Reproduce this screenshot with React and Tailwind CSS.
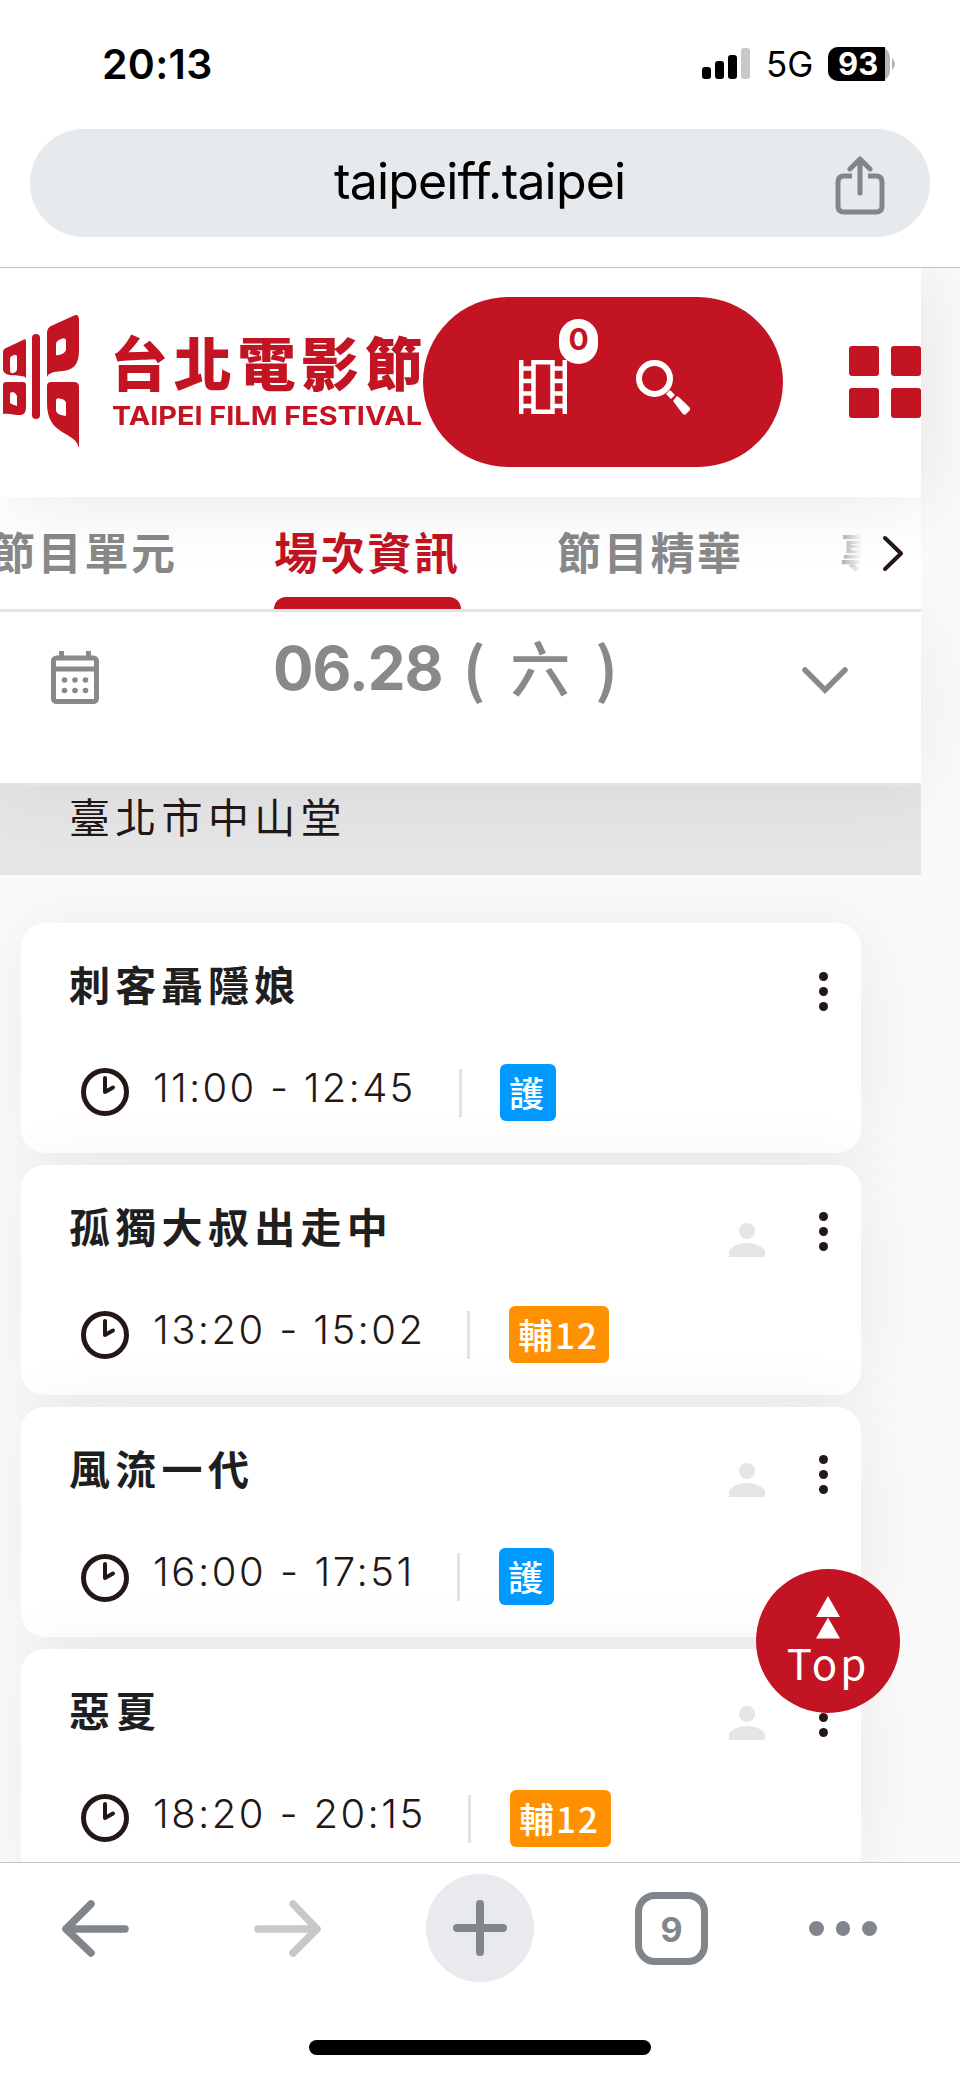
const RED = '#c21423';
const CJK = "font-['Noto_Sans_CJK_TC','Noto_Sans',sans-serif]";
const INTER = 'font-[Inter,sans-serif]';

function StatusBar() {
  return (
    <div className={`flex h-[129px] items-start justify-between pl-[102px] pr-[64px] pt-[43px] ${INTER}`}>
      <span className="text-[41px] leading-[42px] font-semibold tracking-[0.300px]">20:13</span>
      <div className="flex h-[42px] items-center">
        <svg width="49" height="32" viewBox="0 0 49 32">
          <rect x="0" y="19" width="9" height="12" rx="3" />
          <rect x="13" y="13" width="9" height="18" rx="3" />
          <rect x="26" y="7" width="9" height="24" rx="3" />
          <rect x="39" y="0" width="9" height="31" rx="3" fill="#c8c8c8" />
        </svg>
        <span className="ml-[15px] w-[62px] text-[35px] leading-[42px] font-normal">5G</span>
        <div className="relative h-[34px] w-[68px]">
          <svg className="absolute inset-0" width="68" height="34" viewBox="0 0 68 34">
            <rect x="0" y="0" width="62" height="34" rx="10" fill="#b5b5b5" />
            <path d="M10 0H57V34H10A10 10 0 0 1 0 24V10A10 10 0 0 1 10 0Z" />
            <path d="M64 11.500C68 14 68 20 64 22.500Z" fill="#b5b5b5" />
          </svg>
          <span className="absolute left-[10px] top-0 text-[31px] leading-[34px] font-bold text-white">93</span>
        </div>
      </div>
    </div>
  );
}

function AddressBar() {
  return (
    <div className="h-[139px] border-b border-[#c4c4c4] px-[30px]">
      <div className="flex h-[108px] items-center rounded-full bg-[#e6eaed] pr-[44px]">
        <span className={`ml-[304px] w-[300px] text-[50px] leading-[60px] tracking-[-0.850px] whitespace-nowrap pb-[5px] ${INTER}`}>taipeiff.taipei</span>
        <svg className="ml-auto mt-[5px]" width="52" height="60" viewBox="0 0 52 60" fill="none" stroke="#80868b" strokeWidth="5" strokeLinecap="round" strokeLinejoin="round">
          <path d="M18 20H10Q4 20 4 26V50Q4 56 10 56H42Q48 56 48 50V26Q48 20 42 20H34" strokeLinecap="butt" />
          <path d="M26 37V4M16 13L26 3L36 13" />
        </svg>
      </div>
    </div>
  );
}

function Logo() {
  return (
    <div className="flex w-[423px] shrink-0 items-start pl-[3px] text-[#c21423]">
      <svg className="mt-[47px] shrink-0" width="77" height="134" viewBox="0 0 77 134" fill={RED} fillRule="evenodd">
        <path d="M0 37Q0 34 3 33L20 25Q23 23 23 26V63C20 58 0 64 0 54ZM7 44V56Q8 59 10 58Q14 57 14 54V42Q14 39 11 40Q7 41 7 44Z" />
        <path d="M0 70Q0 67 3 67H20Q23 67 23 70V92C23 106 10 97 0 99ZM7 79V88Q10 90 14 91V81Q13 78 10 77Q7 77 7 79Z" />
        <rect x="29" y="19" width="8" height="85" rx="4" />
        <path d="M44 18Q44 13 48 11L70 1Q76 -2 76 5V35C76 66 50 50 44 62ZM53 29V40Q54 41 59 39Q63 37 63 34V25Q62 22 58 24Q53 26 53 29Z" />
        <path d="M44 71Q44 67 48 67H71Q76 67 76 72V133C72 115 44 122 44 88ZM53 86V96Q54 100 63 101V88Q62 84 58 84Q53 82 53 86Z" />
      </svg>
      <div className="ml-[32px] pt-[63px]">
        <div className={`-ml-[2px] h-[70px] text-[58px] leading-[60px] font-black tracking-[5.700px] whitespace-nowrap ${CJK}`}>台北電影節</div>
        <div className={`w-[280px] origin-left scale-x-[1.13] text-[25.500px] leading-[30px] font-bold whitespace-nowrap ${INTER}`}>TAIPEI FILM FESTIVAL</div>
      </div>
    </div>
  );
}

function Header() {
  return (
    <header className="relative z-30 flex h-[229px] w-[921px] items-start bg-white shadow-[5px_5px_75px_rgba(0,0,0,0.09)]">
      <Logo />
      <div className="mt-[29px] flex h-[170px] w-[360px] items-start rounded-full bg-[#c21423] pl-[96px] pt-[63px]">
        <div className="relative">
          <svg width="48" height="54" viewBox="0 0 48 54" fill="none" stroke="#fff" strokeWidth="4.500">
            <path d="M2.200 0V54M45.800 0V54M14.500 0V54M33.500 0V54" />
            <path d="M14 2.200H34M14 51.800H34M2 8.500H14M2 21H14M2 33.500H14M2 46H14M34 8.500H46M34 21H46M34 33.500H46M34 46H46" />
          </svg>
          <span className={`absolute left-[40px] top-[-41px] flex h-[45px] w-[39px] justify-center rounded-full bg-white text-[30px] leading-[40px] font-bold text-[#c21423] ${INTER}`}>0</span>
        </div>
        <svg className="ml-[69px]" width="54" height="55" viewBox="0 0 54 55">
          <circle cx="18.500" cy="18.500" r="15.500" fill="none" stroke="#fff" strokeWidth="6" />
          <path d="M31 34L34 31L38 35L35 38Z" fill="#fff" stroke="#fff" strokeWidth="1.500" strokeLinejoin="round" />
          <path d="M38 41L41 37Q43 38 53 48Q54 49 53 50L49 54Q48 54 47 53Z" fill="#fff" stroke="#fff" strokeWidth="1.500" strokeLinejoin="round" />
        </svg>
      </div>
      <div className="ml-auto mt-[78px] grid grid-cols-2 gap-x-[12px] gap-y-[12px]">
        {[0, 1, 2, 3].map((n) => (
          <div key={n} className="size-[30px] rounded-[3px] bg-[#c21423]" />
        ))}
      </div>
    </header>
  );
}

function Tabs() {
  return (
    <nav className={`relative z-20 flex h-[115px] w-[921px] items-start overflow-hidden border-b-[3px] border-[#e3e3e3] bg-white text-[44px] leading-[108px] font-bold tracking-[2.700px] whitespace-nowrap text-[#898989] ${CJK}`}>
      <span className="ml-[-9px] w-[283px] shrink-0">節目單元</span>
      <span className="relative h-[112px] w-[283px] shrink-0 text-[#c21423]">
        場次資訊
        <span className="absolute bottom-0 left-0 h-[12px] w-[187px] rounded-t-[12px] bg-[#c21423]" />
      </span>
      <span className="w-[283px] shrink-0">節目精華</span>
      <span className="w-[22px] shrink-0 overflow-hidden bg-gradient-to-r from-[#aaa] to-white bg-clip-text text-transparent">專</span>
      <svg className="ml-[19px] mt-[38px] shrink-0" width="24" height="38" viewBox="0 0 24 38" fill="none" stroke="#231815" strokeWidth="4" strokeLinecap="round" strokeLinejoin="round">
        <path d="M4 3L20 18.500L4 34" />
      </svg>
    </nav>
  );
}

function DatePicker() {
  return (
    <div className="relative z-10 flex h-[174px] w-[921px] items-start border-b-[3px] border-[#e3e3e3] bg-white pl-[51px] text-[#898989] shadow-[5px_5px_75px_rgba(0,0,0,0.06)]">
      <svg className="mt-[38px]" width="49" height="55" viewBox="0 0 49 55" fill="none" stroke="#898989" strokeWidth="5">
        <rect x="2.500" y="8" width="43" height="43.500" rx="3" />
        <path d="M2 19H46M10.500 1V8M37.500 1V8" />
        <g fill="#898989" stroke="none">
          <circle cx="13.500" cy="30" r="2.800" /><circle cx="24" cy="30" r="2.800" /><circle cx="34.500" cy="30" r="2.800" />
          <circle cx="13.500" cy="40.500" r="2.800" /><circle cx="24" cy="40.500" r="2.800" /><circle cx="34.500" cy="40.500" r="2.800" />
        </g>
      </svg>
      <div className="ml-[173px] mt-[14px] flex h-[80px] items-center">
        <span className={`w-[190px] pt-[4px] text-[60px] leading-[76px] font-bold tracking-[-1px] ${INTER}`}>06.28</span>
        <span className={`text-[60px] leading-[76px] font-bold tracking-[5.500px] whitespace-nowrap ${CJK}`}>( <span className="font-medium">六</span> )</span>
      </div>
      <svg className="ml-auto mr-[70px] mt-[50px]" width="52" height="34" viewBox="0 0 52 34" fill="none" stroke="#898989" strokeWidth="5.500" strokeLinecap="round" strokeLinejoin="round">
        <path d="M6 8L26 28L46 8" strokeLinejoin="miter" />
      </svg>
    </div>
  );
}

const Dots = () => (
  <div className="flex flex-col gap-[6px]">
    <span className="size-[9px] rounded-full bg-[#231815]" />
    <span className="size-[9px] rounded-full bg-[#231815]" />
    <span className="size-[9px] rounded-full bg-[#231815]" />
  </div>
);

const Person = () => (
  <svg width="36" height="34" viewBox="0 0 36 34" fill="#e5e5e5">
    <circle cx="18" cy="8" r="8" />
    <path d="M0 34V28C3 23 10 20 18 20S33 23 36 28V34Z" />
  </svg>
);

const Clock = () => (
  <svg className="shrink-0" width="48" height="48" viewBox="0 0 48 48" fill="none" stroke="#231815" strokeLinecap="round" strokeLinejoin="round">
    <circle cx="24" cy="24" r="21.500" strokeWidth="5" />
    <path d="M24 10V24L32 19.500" strokeWidth="4" />
  </svg>
);

const films = [
  { title: '刺客聶隱娘', time: '11:00 - 12:45', rating: '護', seat: false, dots: 'mt-[49px]', person: '', clock: 'mt-[4px]', timeCls: 'w-[307px] tracking-[2.250px]', tag: 'ml-[38px] w-[56px] bg-[#0099ff]' },
  { title: '孤獨大叔出走中', time: '13:20 - 15:02', rating: '輔12', seat: true, dots: 'mt-[47px]', person: 'mt-[58px]', clock: 'mt-[5px]', timeCls: 'w-[315px] tracking-[2.400px]', tag: 'ml-[39px] w-[100px] bg-[#ff9100]' },
  { title: '風流一代', time: '16:00 - 17:51', rating: '護', seat: true, dots: 'mt-[48px]', person: 'mt-[56px]', clock: 'mt-[6px]', timeCls: 'w-[305px] tracking-[2.550px]', tag: 'ml-[39px] w-[55px] bg-[#0099ff]' },
  { title: '惡夏', time: '18:20 - 20:15', rating: '輔12', seat: true, dots: 'mt-[49px]', person: 'mt-[57px]', clock: 'mt-[4px]', timeCls: 'w-[316px] tracking-[2.400px]', tag: 'ml-[39px] w-[101px] bg-[#ff9100]' },
];

function FilmCard({ film }) {
  return (
    <article className="relative h-[230px] w-[840px] shrink-0 rounded-[24px] bg-white shadow-[5px_5px_75px_rgba(0,0,0,0.065)]">
      <div className="flex h-[141px] items-start pl-[48px] pr-[33px]">
        <h2 className={`mt-[30px] text-[41px] leading-[60px] font-bold tracking-[5.300px] text-[#1f1f1f] ${CJK}`}>{film.title}</h2>
        <div className="ml-auto flex items-start gap-[54px]">
          {film.seat && <div className={film.person}><Person /></div>}
          <div className={film.dots}><Dots /></div>
        </div>
      </div>
      <div className="flex h-[57px] items-start pl-[60px]">
        <div className={film.clock}><Clock /></div>
        <span className={`ml-[24px] text-[40px] leading-[48px] font-light whitespace-nowrap text-[#231815] ${INTER} ${film.timeCls}`}>{film.time}</span>
        <span className="mt-[5px] -ml-px h-[48px] w-[3px] shrink-0 bg-[#e3e3e3]" />
        <span className={`flex h-[57px] shrink-0 items-start rounded-[6px] pl-[9px] text-[35px] leading-[56px] font-medium tracking-[2px] text-white ${CJK} ${film.tag}`}>{film.rating}</span>
      </div>
    </article>
  );
}

function Toolbar() {
  return (
    <div className="relative z-40 flex h-[217px] flex-col items-center border-t border-[#c4c4c4] bg-white">
      <div className="mt-[11px] flex h-[108px] w-full shrink-0 items-center pl-[60px]">
        <svg width="72" height="60" viewBox="0 0 72 60" fill="none" stroke="#80868b" strokeWidth="7.500" strokeLinecap="round" strokeLinejoin="round">
          <path d="M65 31H6M31 6L6 31L31 55" />
        </svg>
        <svg className="ml-[120px]" width="72" height="60" viewBox="0 0 72 60" fill="none" stroke="#c8c8c8" strokeWidth="7.500" strokeLinecap="round" strokeLinejoin="round">
          <path d="M6 31H65M41 6L65 31L41 55" />
        </svg>
        <div className="ml-[102px] flex size-[108px] items-center justify-center rounded-full bg-[#e8eaee]">
          <svg width="60" height="60" viewBox="0 0 60 60" fill="none" stroke="#80868b" strokeWidth="8" strokeLinecap="round">
            <path d="M30 6V54M7 30H53" />
          </svg>
        </div>
        <div className={`ml-[101px] flex size-[73px] items-center justify-center rounded-[20px] border-[7px] border-[#80868b] pt-[2px] text-[34px] font-bold text-[#80868b] ${INTER}`}>9</div>
        <div className="ml-[101px] flex gap-[12px] pt-[1px]">
          <span className="size-[14.500px] rounded-full bg-[#80868b]" />
          <span className="size-[14.500px] rounded-full bg-[#80868b]" />
          <span className="size-[14.500px] rounded-full bg-[#80868b]" />
        </div>
      </div>
      <div className="mt-[58px] h-[15px] w-[342px] rounded-full bg-black" />
    </div>
  );
}

export default function App() {
  return (
    <div className="relative flex h-[2079px] w-[960px] flex-col overflow-hidden bg-white text-black">
      <StatusBar />
      <AddressBar />
      <main className="h-[1594px] shrink-0 overflow-hidden bg-[#fafafa]">
        <Header />
        <Tabs />
        <DatePicker />
        <div className={`h-[89px] w-[921px] bg-[#e5e5e5] pl-[69px] text-[41px] leading-[59px] tracking-[5.300px] text-[#231815] ${CJK}`}>臺北市中山堂</div>
        <div className="mt-[48px] ml-[21px] flex flex-col gap-[12px]">
          {films.map((film) => (
            <FilmCard key={film.title} film={film} />
          ))}
        </div>
      </main>
      <Toolbar />
      <button className="absolute left-[756px] top-[1569px] z-30 flex size-[144px] flex-col items-center rounded-full bg-[#c21423] pt-[27px] text-white">
        <svg width="24" height="43" viewBox="0 0 24 43" fill="#fff">
          <path d="M12 0L24 21H0ZM12 21.500L24 42.500H0Z" />
        </svg>
        <span className={`mt-[-2px] text-[42px] leading-[50px] font-normal tracking-[3px] ${CJK}`}>Top</span>
      </button>
    </div>
  );
}
